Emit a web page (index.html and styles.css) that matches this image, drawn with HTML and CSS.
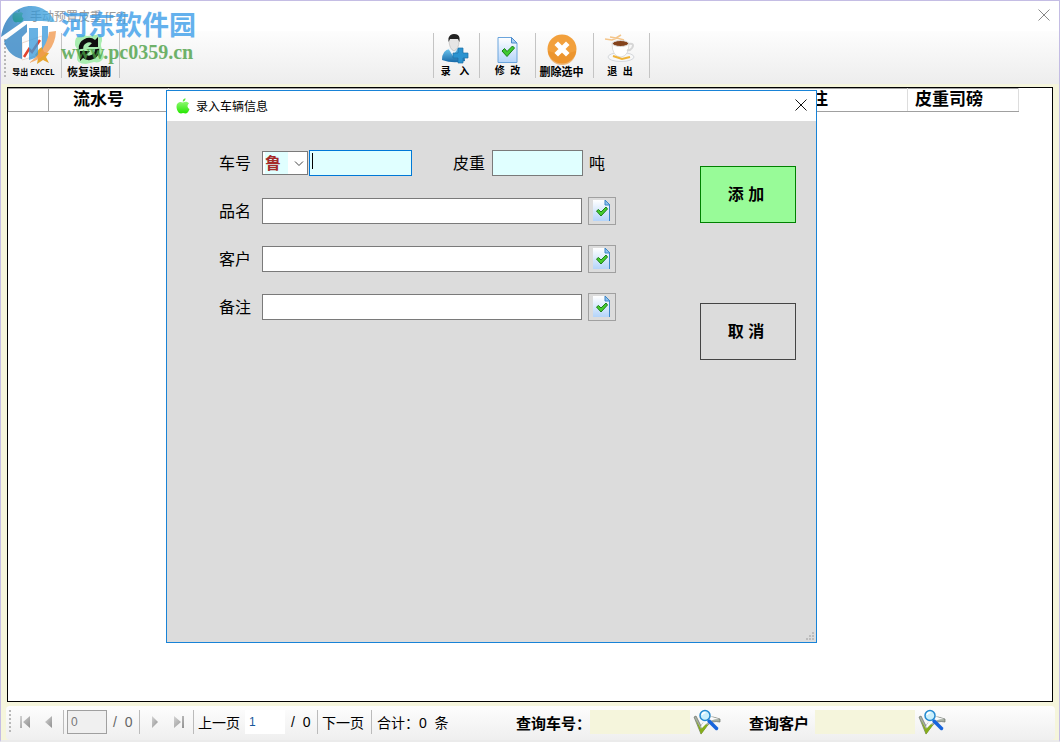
FILE: index.html
```html
<!DOCTYPE html>
<html lang="zh-CN">
<head>
<meta charset="utf-8">
<title>手动预置皮重 [F2]</title>
<link rel="stylesheet" href="styles.css">
</head>
<body>
<svg class="defs" aria-hidden="true">
  <defs>
    <linearGradient id="gBlue" x1="0" y1="0" x2="0" y2="1"><stop offset="0" stop-color="#6cc4ee"/><stop offset="1" stop-color="#1769a8"/></linearGradient>
    <linearGradient id="gPage" x1="0" y1="0" x2="0" y2="1"><stop offset="0" stop-color="#ffffff"/><stop offset="1" stop-color="#b4d4fa"/></linearGradient>
    <linearGradient id="gApple" x1="0" y1="0" x2="0" y2="1"><stop offset="0" stop-color="#8cf870"/><stop offset="1" stop-color="#25e600"/></linearGradient>
    <linearGradient id="gGrey" x1="0" y1="0" x2="1" y2="1"><stop offset="0" stop-color="#d4d4d4"/><stop offset="1" stop-color="#909090"/></linearGradient>
    <linearGradient id="gMark" x1="0" y1="0" x2="1" y2="0"><stop offset="0" stop-color="#2274b8"/><stop offset="1" stop-color="#46aee8"/></linearGradient>
    <symbol id="page" viewBox="0 0 20 26">
      <path d="M.5.5H14L19.500 6V25.500H.5Z" fill="url(#gPage)" stroke="#6ba4dc"/>
      <path d="M14 .5V6H19.500Z" fill="#a9cff5" stroke="#4c8ccc"/>
      <path d="M4.500 14 7 11.500 9.500 14.500 15 9 17 11 9.500 19.500Z" fill="#3fc930" stroke="#168016"/>
    </symbol>
    <symbol id="pageSmall" viewBox="0 0 18 22">
      <path d="M0 0H12L17 5V21H0Z" fill="url(#gPage)"/>
      <path d="M12 0V5H17Z" fill="#8fc2ee" stroke="#3d86c8"/>
      <path d="M16.500 5V21" stroke="#3d86c8" stroke-width="1"/>
      <path d="M3.500 11 5.500 9.500 8 12 13 7 14.500 9 8 16Z" fill="#46cd2c" stroke="#1b7f1b"/>
    </symbol>
    <symbol id="search" viewBox="0 0 28 26">
      <path d="M1 8 3 7 8 17Q14 7 20 8L27 10V13Q19 11 14 17L8 25Z" fill="#a8b0a4" stroke="#687068" stroke-width=".7"/>
      <path d="M3 11 8 20 12 15 15 16 8 25.500Z" fill="#86ae1c"/>
      <path d="M8 17Q13 7 19 8L26 10Q18 10 13 15L9 19Z" fill="#fafafa"/>
      <path d="M16 12 23.500 19.500" stroke="#1764dc" stroke-width="3.500" stroke-linecap="round"/>
      <circle cx="12" cy="6.500" r="5" fill="#c9effc" stroke="#2389cf" stroke-width="1.500"/>
      <path d="M9 6Q9.500 3.500 12.500 3.500" stroke="#fff" stroke-width="1.500" fill="none"/>
    </symbol>
    <symbol id="apple" viewBox="0 0 14 16">
      <path d="M7 4.500C9 3 12 3.500 13 5.500 11 7 11 9.500 13.500 11 12.500 14 11 15.500 9.500 15.500 8 14.800 6 14.800 5 15.500 2.500 15.500.5 12 .5 8.500 .5 4.500 4 3 7 4.500Z" fill="url(#gApple)"/>
      <path d="M6.800 3.800Q6.500 1 9.500.3 9.600 3 6.800 3.800Z" fill="#55e838"/>
    </symbol>
  </defs>
</svg>

<main class="window">
  <header class="titlebar">
    <svg class="app-icon"><use href="#apple"/></svg>
    <h1 class="title">手动预置皮重 [F2]</h1>
    <button class="close" aria-label="关闭"><svg viewBox="0 0 12 12"><path d="M.5.5 11.500 11.500M11.500.5.5 11.500"/></svg></button>
  </header>

  <nav class="toolbar">
    <span class="grip"></span>
    <button class="tool tool-export">
      <svg viewBox="0 0 32 32"><path d="M4 10 24 3V21L4 27Z" fill="#fff" stroke="#ead8ce"/><path d="M6 24 11 16 14 19 22 7" stroke="#e2432e" stroke-width="2.500" fill="none"/><path d="M21 16 24 14 26 19 31 20 28 24 31 30 25 27 19 31 20 25 17 22Z" fill="#e6a530"/></svg>
      <span>导出 EXCEL</span>
    </button>
    <button class="tool tool-restore">
      <svg viewBox="0 0 32 32"><path d="M3 5Q8 0 14 3L22 2Q30 0 29 8 27 12 29 16L31 24Q28 31 21 29L13 31Q3 31 4 24L5 17Q0 12 3 5Z" fill="#a9edb0"/><path d="M8 16A8 8 0 0 1 21 9M24 16A8 8 0 0 1 11 23" stroke="#101010" stroke-width="4.500" fill="none"/><path d="M25 4V14H15ZM7 28V18H17Z" fill="#101010"/></svg>
      <span>恢复误删</span>
    </button>
    <span class="gap"></span>
    <button class="tool tool-add">
      <svg viewBox="0 0 32 32"><path d="M3 27Q3 17 11 16L20 16Q26 18 26 28 14 31 3 27Z" fill="url(#gBlue)"/><path d="M9 15 14 23 19 15Z" fill="#eef5fa"/><path d="M10 7Q10 3 15 3 20 3 20 8 20 16 15 18 10 16 10 7Z" fill="#e5e5e5" stroke="#aaa" stroke-width=".5"/><path d="M9.500 9V5Q11 1 15 1 20 1 20.500 5V9L19 6H11Z" fill="#222"/><path d="M19 15H24V20H29V25H24V30H19V25H14V20H19Z" fill="#2a93d0" stroke="#1c70a8" stroke-width=".7"/></svg>
      <span>录&nbsp;&nbsp;&nbsp;入</span>
    </button>
    <button class="tool tool-edit">
      <svg class="page"><use href="#page"/></svg>
      <span>修&nbsp;&nbsp;改</span>
    </button>
    <button class="tool tool-delete">
      <svg viewBox="0 0 32 32"><circle cx="16" cy="16" r="14.500" fill="#f2a03c"/><path d="M2 18A14 14 0 0 0 30 18Q16 23 2 18Z" fill="#e88e24" opacity=".6"/><path d="M12 12 20 20M20 12 12 20" stroke="#fff" stroke-width="5" stroke-linecap="square"/></svg>
      <span>删除选中</span>
    </button>
    <button class="tool tool-exit">
      <svg viewBox="0 0 32 32"><path d="M1 6 8 7 13 5 20 7M6 4 12 5 17 2" stroke="#f4c68c" stroke-width="1.500" fill="none"/><ellipse cx="17" cy="24" rx="13" ry="4.500" fill="#f8f8f8" stroke="#d5d8dc"/><path d="M8 10Q8 24 17 24 25 23 25 10Z" fill="#fff" stroke="#d0d0d0" stroke-width=".7"/><path d="M25 11Q31 10 28 15 26 18 23 17" fill="none" stroke="#d6d6d6" stroke-width="2"/><ellipse cx="16.500" cy="10.500" rx="8" ry="3" fill="#84431c" stroke="#ddd"/><path d="M9 23 18 26 26 24" stroke="#efb338" stroke-width="2" fill="none"/></svg>
      <span>退&nbsp;&nbsp;出</span>
    </button>
  </nav>

  <section class="content">
    <table class="grid">
      <thead><tr><th class="col-index"></th><th class="col-serial">流水号</th><th class="col-note">备注</th><th class="col-tare">皮重司磅</th></tr></thead>
    </table>
  </section>

  <footer class="statusbar">
    <span class="grip"></span>
    <button class="nav" aria-label="第一条"><svg viewBox="0 0 12 12"><path d="M1 0H3V12H1ZM11 0V12L4 6Z" fill="url(#gGrey)"/></svg></button>
    <button class="nav" aria-label="上一条"><svg viewBox="0 0 12 12"><path d="M9 0V12L2 6Z" fill="url(#gGrey)"/></svg></button>
    <span class="sep"></span>
    <input class="position" aria-label="当前位置" value="0" disabled>
    <span class="count muted">/&nbsp; 0</span>
    <span class="sep"></span>
    <button class="nav" aria-label="下一条"><svg viewBox="0 0 12 12"><path d="M3 0V12L9 6Z" fill="url(#gGrey)"/></svg></button>
    <button class="nav" aria-label="最后一条"><svg viewBox="0 0 12 12"><path d="M1 0V12L8 6ZM9 0H11V12H9Z" fill="url(#gGrey)"/></svg></button>
    <span class="sep"></span>
    <button class="link">上一页</button>
    <input class="page-number" aria-label="页码" value="1">
    <span class="count">/&nbsp; 0</span>
    <span class="sep"></span>
    <button class="link">下一页</button>
    <span class="sep"></span>
    <span class="total">合计：0&nbsp; 条</span>
    <label class="query" for="q-car">查询车号：</label>
    <input class="query-input" id="q-car">
    <button class="find" aria-label="查询车号"><svg><use href="#search"/></svg></button>
    <label class="query query-customer" for="q-customer">查询客户</label>
    <input class="query-input" id="q-customer">
    <button class="find" aria-label="查询客户"><svg><use href="#search"/></svg></button>
  </footer>
</main>

<div class="watermark">
  <svg viewBox="0 0 58 60"><path d="M1 33C4 12 18 2 31 2 43 2 51 9 55 18L42 17 24 17Z" fill="url(#gMark)"/><path d="M4 37 27 20V28L22 33V55Q8 52 4 37Z" fill="#2f83c4"/><path d="M29 24H38V53L29 56Z" fill="#3d9cdc"/><path d="M42 22H48V45L42 50Z" fill="#3d9cdc"/><path d="M56 27Q55 51 29 59 47 45 49 28Z" fill="#f29a50"/></svg>
  <div class="mark-text"><span class="mark-name">河东软件园</span><span class="mark-url">www.pc0359.cn</span></div>
</div>

<section class="dialog" role="dialog" aria-labelledby="dlg-title">
  <header class="dialog-title">
    <svg class="app-icon"><use href="#apple"/></svg>
    <h2 class="title" id="dlg-title">录入车辆信息</h2>
    <button class="close" aria-label="关闭"><svg viewBox="0 0 12 12"><path d="M.5.5 11.500 11.500M11.500.5.5 11.500"/></svg></button>
  </header>
  <form class="form">
    <div class="fields">
      <div class="row">
        <label for="province">车号</label>
        <span class="combo"><select id="province"><option>鲁</option></select><svg viewBox="0 0 10 6"><path d="M1 .5 5 4.500 9 .5" fill="none" stroke="#444"/></svg></span>
        <span class="plate-box"><input class="plate" aria-label="车牌号码"><i class="caret"></i></span>
        <label class="tare-label" for="tare">皮重</label>
        <input class="tare" id="tare">
        <span class="unit">吨</span>
      </div>
      <div class="row">
        <label for="goods">品名</label><input class="wide" id="goods">
        <button type="button" class="pick" aria-label="选择品名"><svg><use href="#pageSmall"/></svg></button>
      </div>
      <div class="row">
        <label for="customer">客户</label><input class="wide" id="customer">
        <button type="button" class="pick" aria-label="选择客户"><svg><use href="#pageSmall"/></svg></button>
      </div>
      <div class="row">
        <label for="note">备注</label><input class="wide" id="note">
        <button type="button" class="pick" aria-label="选择备注"><svg><use href="#pageSmall"/></svg></button>
      </div>
    </div>
    <div class="actions">
      <button type="button" class="action action-add">添 加</button>
      <button type="button" class="action">取 消</button>
    </div>
  </form>
  <svg class="resize" viewBox="0 0 8 8"><path d="M6 0H8V2H6ZM3 3H5V5H3ZM6 3H8V5H6ZM0 6H2V8H0ZM3 6H5V8H3ZM6 6H8V8H6Z" fill="#bcbcbc"/></svg>
</section>
</body>
</html>
```
FILE: styles.css
```css
* { box-sizing: border-box; }
body {
  margin: 0;
  color: #000;
  font-family: "Liberation Sans", "Noto Sans CJK SC", sans-serif;
  font-size: 14px;
}
button, input, select { margin: 0; padding: 0; border: 0; font: inherit; color: inherit; }
button { background: none; }
h1, h2 { margin: 0; font-weight: 400; }
svg { display: block; flex: none; }
.defs { position: absolute; width: 0; height: 0; }

.window {
  display: flex;
  flex-direction: column;
  height: 100vh;
  border: 1px solid #c4bde4;
  border-bottom: 2px solid #ebebeb;
  background: #f5f5dc;
}
.titlebar { display: flex; align-items: center; height: 30px; padding: 0 9px; background: #fff; }
.app-icon { width: 14px; height: 16px; }
.title { flex: 1; margin-left: 6px; padding-bottom: 2px; font-size: 12px; }
.titlebar .title { color: #999; }
.close { padding-bottom: 2px; }
.close svg { width: 12px; height: 12px; fill: none; stroke: #111; }
.titlebar .close svg { stroke: #888; }

.toolbar {
  display: flex;
  flex: none;
  height: 53px;
  padding: 2px 0 6px 3px;
  background: linear-gradient(#fdfdfd, #ededed);
}
.grip {
  flex: none;
  width: 2px;
  height: 40px;
  margin-top: 6px;
  background: repeating-linear-gradient(#b8b8b8 0 2px, transparent 2px 4px);
}
.tool {
  display: flex;
  flex-direction: column;
  align-items: center;
  justify-content: space-between;
  flex: none;
  padding-right: 3px;
  border-right: 1px solid #c4c4c4;
  font-size: 10px;
  font-weight: 700;
  line-height: 14px;
  white-space: nowrap;
}
.tool svg { width: 32px; height: 32px; }
.tool svg.page { width: 21px; height: 26px; margin-top: 4px; }
.tool-export { width: 56px; padding-right: 0; font-family: "Noto Sans CJK SC", sans-serif; font-size: 8px; }
.tool-restore { width: 58px; font-size: 11px; }
.gap { width: 314px; border-right: 1px solid #c4c4c4; }
.tool-add { width: 46px; }
.tool-edit { width: 56px; padding-right: 0; }
.tool-delete { width: 58px; padding-right: 6px; font-size: 11px; }
.tool-exit { width: 56px; }

.content { flex: 1; margin: 3px 6px 4px; border: 1px solid #000; background: #fff; }
.grid { width: 1011px; border-collapse: collapse; table-layout: fixed; }
.grid th {
  height: 23px;
  padding: 0 8px 0 7px;
  border: 1px solid #a0a0a0;
  border-left-color: #ddd;
  border-right-color: #ddd;
  font-size: 17px;
  line-height: 20px;
  text-align: left;
}
.grid .col-index { width: 40px; border-right-color: #a0a0a0; }
.grid .col-serial { width: 120px; padding-left: 24px; }
.grid .col-note { padding-right: 79px; text-align: right; }
.grid .col-tare { width: 111px; }

.statusbar {
  display: flex;
  align-items: center;
  flex: none;
  height: 34px;
  margin: 0 4px 0 5px;
  padding: 0 0 2px 3px;
  border-radius: 4px;
  background: linear-gradient(#fdfdfd, #efefef);
  white-space: nowrap;
}
.statusbar .grip { height: 24px; margin: 0 2px 0 0; }
.nav { width: 24px; display: flex; justify-content: center; flex: none; }
.nav svg { width: 12px; height: 12px; }
.sep { flex: none; width: 1px; height: 24px; margin: 0 3px 0 2px; background: #bbb; }
.position { width: 40px; height: 24px; padding: 0 3px; border: 1px solid #a0a0a0; background: #f0f0f0; color: #777; font-size: 12px; }
.count { width: 30px; padding-left: 6px; }
.muted { color: #666; }
.link { width: 48px; padding-right: 4px; text-align: center; }
.page-number { width: 40px; height: 24px; padding-left: 4px; background: #fff; color: #17579c; font-size: 12px; }
.total { width: 141px; padding-left: 2px; }
.query { width: 74px; font-size: 15px; font-weight: 700; }
.query-customer { width: 66px; margin-left: 28px; }
.query-input { width: 100px; height: 24px; background: #f5f5dc; }
.find { margin-left: 3px; }
.find svg { width: 28px; height: 26px; }

.watermark { position: absolute; left: 0; top: 4px; display: flex; opacity: .78; pointer-events: none; }
.watermark svg { width: 58px; height: 60px; }
.mark-text { display: flex; flex-direction: column; margin-left: 3px; }
.mark-name { color: #399ce9; font-family: "Noto Sans CJK SC", sans-serif; font-size: 27px; font-weight: 700; line-height: 40px; }
.mark-url { color: #489e42; font-family: "Liberation Serif", serif; font-size: 20px; font-weight: 700; line-height: 16px; }

.dialog {
  position: absolute;
  left: 166px;
  top: 90px;
  display: flex;
  flex-direction: column;
  width: 651px;
  height: 553px;
  border: 1px solid #1883d7;
  background: #dcdcdc;
}
.dialog-title { display: flex; align-items: center; height: 30px; padding: 0 9px; background: #fff; }
.form { display: flex; justify-content: space-between; padding: 28px 20px 0 52px; font-size: 16px; }
.fields { display: flex; flex-direction: column; gap: 20px; }
.row { display: flex; align-items: center; height: 28px; }
.row > label { width: 43px; padding-bottom: 2px; }
.row input { height: 26px; padding: 0 4px; border: 1px solid #7a7a7a; background: #fff; }
.row input.plate { width: 103px; border-color: #0078d7; background: #e0ffff; outline: 0; }
.row input.tare { width: 91px; background: #e0ffff; }
.row > .tare-label { width: 39px; margin-left: 41px; }
.row input.wide { width: 320px; }
.unit { margin-left: 6px; padding-bottom: 2px; }
.combo { position: relative; width: 46px; margin-right: 1px; }
.combo select {
  display: block;
  width: 46px;
  height: 24px;
  padding-left: 2px;
  border: 1px solid #7a7a7a;
  border-radius: 0;
  appearance: none;
  background: linear-gradient(90deg, #fff 2px, #e0ffff 2px 25px, #fff 25px);
  color: #a52a2a;
  font-weight: 700;
}
.combo svg { position: absolute; right: 4px; top: 10px; width: 10px; height: 6px; }
.plate-box { position: relative; }
.plate-box input { display: block; }
.caret { position: absolute; left: 3px; top: 3px; width: 1px; height: 16px; background: #000; }
.pick {
  display: flex;
  align-items: center;
  justify-content: center;
  width: 28px;
  height: 28px;
  margin-left: 6px;
  border: 1px solid #a0a0a0;
}
.pick svg { width: 18px; height: 22px; }
.actions { display: flex; flex-direction: column; gap: 80px; padding-top: 17px; }
.action { width: 96px; height: 57px; padding: 0 4px 4px 0; border: 1px solid #444; font-weight: 700; }
.action-add { border-color: #008000; background: #98fb98; }
.resize { position: absolute; right: 2px; bottom: 2px; width: 8px; height: 8px; }

.titlebar { padding-left: 11px; }
.titlebar .app-icon { width: 12px; height: 14px; }
.titlebar .close { margin-right: 0; }
```
